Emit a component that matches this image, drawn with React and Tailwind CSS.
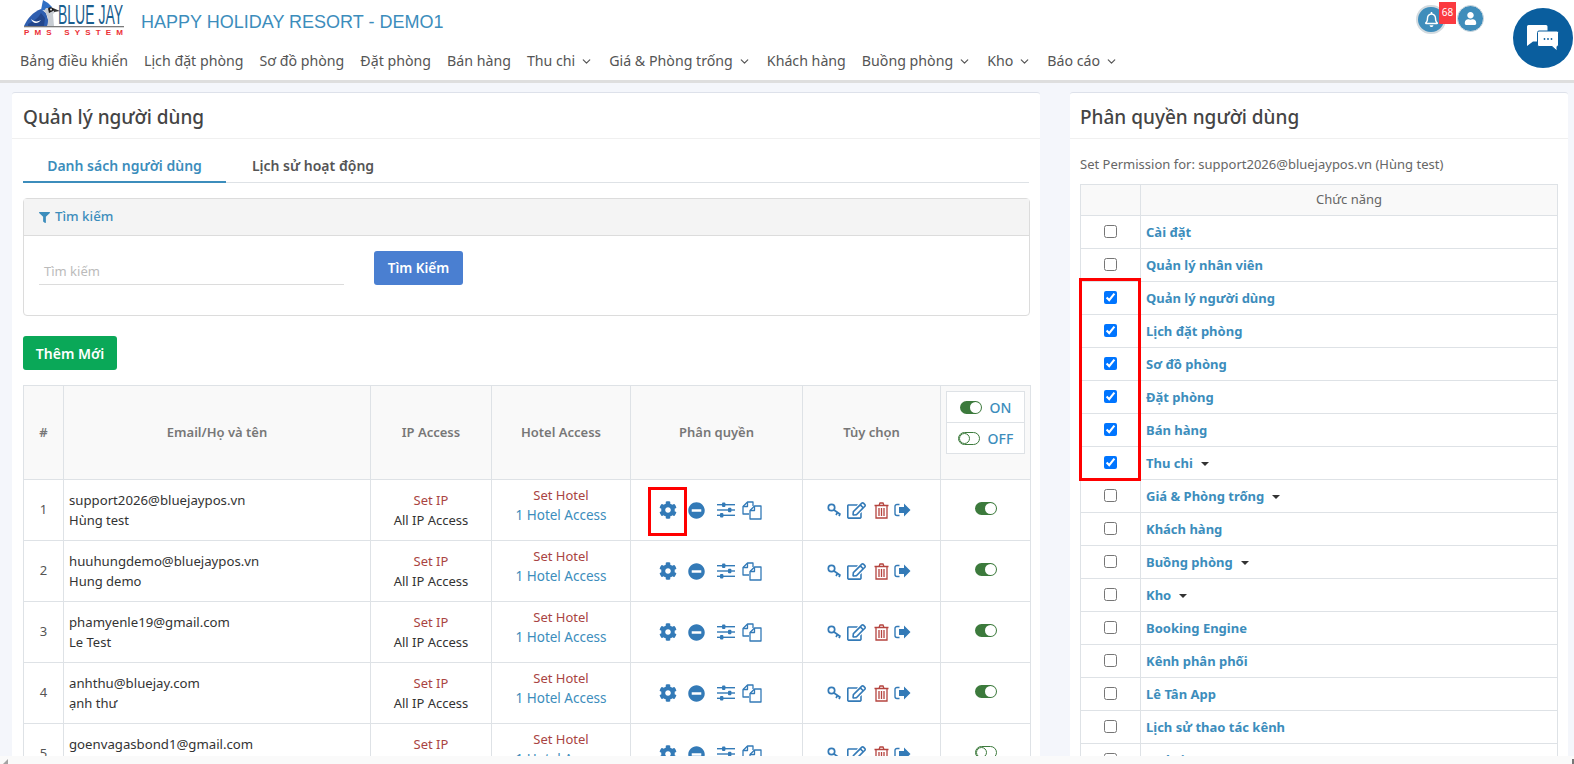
import React from "react";
import { FaCog, FaMinusCircle, FaRegEdit, FaFilter, FaRegBell, FaUser } from "react-icons/fa";
import { ChevronDown } from "lucide-react";

const nav = [
  ["Bảng điều khiển"], ["Lịch đặt phòng"], ["Sơ đồ phòng"], ["Đặt phòng"], ["Bán hàng"], ["Thu chi", 1],
  ["Giá & Phòng trống", 1], ["Khách hàng"], ["Buồng phòng", 1], ["Kho", 1], ["Báo cáo", 1],
];
const users = [
  ["support2026@bluejaypos.vn", "Hùng test", true],
  ["huuhungdemo@bluejaypos.vn", "Hung demo", true],
  ["phamyenle19@gmail.com", "Le Test", true],
  ["anhthu@bluejay.com", "ạnh thư", true],
  ["goenvagasbond1@gmail.com", "goen", false],
];
const perms = [
  ["Cài đặt"], ["Quản lý nhân viên"], ["Quản lý người dùng", 0, 1], ["Lịch đặt phòng", 0, 1], ["Sơ đồ phòng", 0, 1],
  ["Đặt phòng", 0, 1], ["Bán hàng", 0, 1], ["Thu chi", 1, 1], ["Giá & Phòng trống", 1], ["Khách hàng"],
  ["Buồng phòng", 1], ["Kho", 1], ["Booking Engine"], ["Kênh phân phối"], ["Lê Tân App"], ["Lịch sử thao tác kênh"], ["Website"],
];

function Toggle({ on }) {
  return on ? (
    <span className="inline-flex w-[22px] h-[13px] rounded-full bg-[#3c7a3c] items-center justify-end pr-[1px]">
      <span className="w-[11px] h-[11px] rounded-full bg-white" />
    </span>
  ) : (
    <span className="inline-flex w-[22px] h-[13px] rounded-full border border-[#3c7a3c] bg-white items-center justify-start">
      <span className="w-[11px] h-[11px] rounded-full bg-white border border-[#3c7a3c]" />
    </span>
  );
}
function Sliders() {
  return (
    <svg width="18" height="16" viewBox="0 0 18 16" fill="#337ab7">
      <rect x="0" y="2" width="18" height="1.4" /><rect x="0" y="7.3" width="18" height="1.4" /><rect x="0" y="12.6" width="18" height="1.4" />
      <rect x="5" y="0.5" width="3.4" height="4.4" rx="1" /><rect x="11" y="5.8" width="3.4" height="4.4" rx="1" /><rect x="3" y="11.1" width="3.4" height="4.4" rx="1" />
    </svg>
  );
}
function Copy() {
  return (
    <svg width="20" height="19" viewBox="0 0 20 19" fill="none" stroke="#337ab7" strokeWidth="1.3" strokeLinejoin="round">
      <path d="M7 13H1V5.500L5.500 1H11V5" />
      <path d="M5.500 1V5.500H1" />
      <path d="M8 18V9.500L12.500 5H19V18Z" fill="white" />
      <path d="M12.500 5V9.500H8" />
    </svg>
  );
}
function Key() {
  return (
    <svg width="15" height="14" viewBox="0 0 15 14" fill="none" stroke="#337ab7" strokeWidth="1.7">
      <circle cx="4.500" cy="4.500" r="3.200" />
      <path d="M7 7L13.500 11.500M10.500 9.500L9 12M13 11L12 13" />
    </svg>
  );
}
function Trash() {
  return (
    <svg width="15" height="17" viewBox="0 0 15 17" fill="none" stroke="#b5443f" strokeWidth="1.3">
      <path d="M0.500 3.500H14.500M5 3.500L6 1H9L10 3.500" />
      <path d="M2 3.500V16H13V3.500" />
      <path d="M5 6V14M7.500 6V14M10 6V14" />
    </svg>
  );
}
function Out() {
  return (
    <svg width="17" height="14" viewBox="0 0 17 14" fill="#337ab7">
      <path d="M5.500 1.500H3A2 2 0 0 0 1 3.500V10.500A2 2 0 0 0 3 12.500H5.500" fill="none" stroke="#337ab7" strokeWidth="1.4" />
      <path d="M10 0.500L16.500 7L10 13.500V10H5V4H10Z" />
    </svg>
  );
}
function Logo() {
  return (
    <svg width="104" height="37" viewBox="0 0 104 37" className="shrink-0">
      <path d="M2 26C5 19 11 12 19 9L24 13L28 26Z" fill="#2f5fb0" />
      <path d="M6 24C10 22 16 19 19 13L23 18L22 26H6Z" fill="#23478c" />
      <path d="M9 19C12 22 16 22 19 20C16 24 11 24 9 19Z" fill="#fff" />
      <path d="M19 10L21 0L26 3L30 7L27 11Z" fill="#2f6fc4" />
      <path d="M24 8L31 8L33 12L31 14L32 26H25C27 21 26 15 22 11Z" fill="#c7ccd2" />
      <path d="M26 8.500C28 6.500 31 7 33 10L27 13Z" fill="#1d1d1f" />
      <path d="M32 8.500L38 11L32 12Z" fill="#333" />
      <circle cx="29" cy="9.500" r="0.900" fill="#fff" />
      <rect x="2" y="26" width="100" height="1.300" fill="#7b7b7b" />
      <text x="36" y="23.500" textLength="65" lengthAdjust="spacingAndGlyphs" fontFamily="'Liberation Sans'" fontSize="27" fill="#1b5f8f">BLUE JAY</text>
      <text x="2" y="35" textLength="99" lengthAdjust="spacing" fontFamily="'Liberation Sans'" fontWeight="700" fontSize="8" fill="#ec2f36">PMS SYSTEM</text>
    </svg>
  );
}
function Chat() {
  return (
    <svg width="34" height="28" viewBox="0 0 34 28">
      <path d="M1 2.500A1.500 1.500 0 0 1 2.500 1H20A1.500 1.500 0 0 1 21.500 2.500V16A1.500 1.500 0 0 1 20 17.500H7L1 22Z" fill="#fff" />
      <path d="M11.500 8.500A1.500 1.500 0 0 1 13 7H31A1.500 1.500 0 0 1 32.500 8.500V21A1.500 1.500 0 0 1 31 22.500V27L26 22.500H13A1.500 1.500 0 0 1 11.500 21Z" fill="#fff" stroke="#0a5e9e" strokeWidth="1" />
      <circle cx="18.500" cy="15" r="0.900" fill="#0a5e9e" /><circle cx="22" cy="15" r="0.900" fill="#0a5e9e" /><circle cx="25.500" cy="15" r="0.900" fill="#0a5e9e" />
    </svg>
  );
}

export default function App() {
  const th = "border border-[#dee2e6] text-[13px] font-semibold text-[#777] text-center align-middle";
  const td = "border border-[#dee2e6] align-middle text-center text-[13px] text-[#333] h-[61px]";
  return (
    <div className="h-screen w-full flex flex-col overflow-hidden bg-[#f4f6fb] text-[#333] font-['Noto_Sans','Open_Sans',sans-serif] relative">
      <header className="bg-white h-[83px] shrink-0 border-b-[3px] border-[#dedede] pl-[20px] flex flex-col">
        <div className="h-[49px] shrink-0 flex items-start">
          <div className="ml-[2px]"><Logo /></div>
          <div className="ml-[15px] mt-[12px] text-[18px] leading-[20px] text-[#3c8dbc] font-['Liberation_Sans',sans-serif]">HAPPY HOLIDAY RESORT - DEMO1</div>
          <div className="ml-auto mr-[90px] mt-[5px] flex items-start gap-[11px]">
            <span className="relative w-[30px] h-[29px] rounded-full bg-[#3f8dbb] border-2 border-[#d3dbe0] flex items-center justify-center">
              <FaRegBell className="text-white text-[15px]" />
              <span className="absolute left-[21px] top-[-5px] w-[17px] h-[22px] bg-[#fb3a40] text-white text-[10px] leading-[20px] text-center">68</span>
            </span>
            <span className="w-[27px] h-[27px] rounded-full bg-[#3f8dbb] border border-[#d3dbe0] flex items-center justify-center">
              <FaUser className="text-white text-[13px]" />
            </span>
          </div>
        </div>
        <nav className="flex gap-[16px] text-[14.2px] leading-[24px] text-[#555]">
          {nav.map(([t, c]) => (
            <span key={t} className="flex items-center gap-[5px] whitespace-nowrap">{t}{c ? <ChevronDown size={13} strokeWidth={2.2} /> : null}</span>
          ))}
        </nav>
      </header>

      <span className="absolute left-[1513px] top-[8px] w-[60px] h-[60px] rounded-full bg-[#0a5e9e] flex items-center justify-center z-20"><Chat /></span>

      <main className="flex-1 min-h-0 overflow-hidden flex items-start pl-[12px] pr-[6px] pt-[9px] gap-[30px]">
        <section className="w-[1028px] bg-white border-t border-[#dde1ea] rounded-t-[3px] shrink-0">
          <h2 className="h-[46px] px-[11px] pt-[3px] flex items-center text-[19px] font-medium text-[#444] border-b border-[#f0f0f0]">Quản lý người dùng</h2>
          <div className="px-[11px] pt-[13px]">
            <div className="flex h-[31px] border-b border-[#dee2e6] text-[14px] font-semibold w-[1006px]">
              <div className="w-[203px] h-[31px] text-center text-[#3c8dbc] border-b-2 border-[#3c8dbc] leading-[28px]">Danh sách người dùng</div>
              <div className="w-[148px] text-center text-[#555] leading-[28px] ml-[13px]">Lịch sử hoạt động</div>
            </div>
            <div className="mt-[15px] w-[1007px] h-[118px] border border-[#dcdcdc] rounded-[4px]">
              <div className="h-[37px] bg-[#f4f4f4] border-b border-[#dcdcdc] pl-[15px] flex items-center gap-[5px] text-[13.3px] font-medium text-[#3c8dbc]"><FaFilter className="text-[11px]" />Tìm kiếm</div>
              <div className="flex items-start pl-[15px] pt-[15px]">
                <div className="w-[305px] mt-[8px] h-[26px] border-b border-[#dcdcdc] pl-[5px] text-[13px] leading-[24px] text-[#bbb]">Tìm kiếm</div>
                <button className="ml-[30px] w-[89px] h-[34px] bg-[#4a7fd1] rounded-[3px] text-white text-[13.500px] font-semibold">Tìm Kiếm</button>
              </div>
            </div>
            <button className="mt-[20px] block w-[94px] h-[34px] bg-[#0aa858] rounded-[3px] text-white text-[14px] font-semibold">Thêm Mới</button>
            <table className="mt-[15px] border-collapse table-fixed w-[1007px] bg-white">
              <colgroup>
                <col className="w-[40px]" /><col className="w-[307px]" /><col className="w-[121px]" /><col className="w-[139px]" /><col className="w-[172px]" /><col className="w-[138px]" /><col className="w-[90px]" />
              </colgroup>
              <thead>
                <tr className="h-[94px] bg-[#f9f9f9]">
                  <th className={th}>#</th><th className={th}>Email/Họ và tên</th><th className={th}>IP Access</th><th className={th}>Hotel Access</th><th className={th}>Phân quyền</th><th className={th}>Tùy chọn</th>
                  <th className={th + " !align-top pt-[5px]"}>
                    <div className="mx-auto w-[79px] h-[63px] bg-white border border-[#dee2e6] text-[#3c8dbc] text-[14px] font-medium">
                      <div className="h-[31px] flex items-center justify-center gap-[8px] border-b border-[#dee2e6]"><Toggle on />ON</div>
                      <div className="h-[30px] flex items-center justify-center gap-[8px]"><Toggle />OFF</div>
                    </div>
                  </th>
                </tr>
              </thead>
              <tbody>
                {users.map(([mail, name, on], i) => (
                  <tr key={mail}>
                    <td className={td + " text-[#555]"}>{i + 1}</td>
                    <td className={td + " !text-left pl-[5px] leading-[20px]"}><div className="text-[13.2px]">{mail}</div><div>{name}</div></td>
                    <td className={td + " leading-[20px]"}><div className="text-[#a94442]">Set IP</div><div>All IP Access</div></td>
                    <td className={td + " leading-[20px] pb-[10px]"}><div className="text-[#a94442]">Set Hotel</div><div className="text-[#3c8dbc] text-[13.500px]">1 Hotel Access</div></td>
                    <td className={td}>
                      <div className="flex items-center justify-center pr-[13px] gap-[11px]">
                        <FaCog className="text-[#337ab7] text-[18px]" />
                        <FaMinusCircle className="text-[#337ab7] text-[17px]" />
                        <span className="ml-[1px]"><Sliders /></span>
                        <span className="-ml-[4px]"><Copy /></span>
                      </div>
                    </td>
                    <td className={td}>
                      <div className="flex items-center justify-center pr-[6px] gap-[5px]">
                        <Key />
                        <FaRegEdit className="text-[#337ab7] text-[19px]" />
                        <span className="ml-[3px]"><Trash /></span>
                        <Out />
                      </div>
                    </td>
                    <td className={td}><Toggle on={on} /></td>
                  </tr>
                ))}
              </tbody>
            </table>
          </div>
        </section>

        <section className="flex-1 min-w-0 bg-white border-t border-[#dde1ea] rounded-t-[3px]">
          <h2 className="h-[46px] px-[10px] pt-[3px] flex items-center text-[19px] font-medium text-[#444] border-b border-[#f0f0f0]">Phân quyền người dùng</h2>
          <div className="px-[10px]">
            <p className="h-[45px] pt-[15px] text-[13px] leading-[20px] text-[#666]">Set Permission for: support2026@bluejaypos.vn (Hùng test)</p>
            <table className="border-collapse table-fixed w-[478px]">
              <colgroup><col className="w-[60px]" /><col /></colgroup>
              <thead>
                <tr className="h-[31px] bg-[#f9f9f9]"><th className="border border-[#dee2e6]" /><th className="border border-[#dee2e6] text-[13px] font-normal text-[#666]">Chức năng</th></tr>
              </thead>
              <tbody>
                {perms.map(([t, c, ch]) => (
                  <tr key={t} className="h-[33px]">
                    <td className="border border-[#dee2e6] text-center align-middle"><input type="checkbox" defaultChecked={!!ch} className="block mx-auto w-[13px] h-[13px] -translate-y-[1px]" /></td>
                    <td className="border border-[#dee2e6] pl-[5px] pt-[2px] text-[13px] font-bold text-[#3c8dbc]">
                      <span className="inline-flex items-center gap-[6px]">{t}{c ? <span className="w-0 h-0 border-x-[4px] border-x-transparent border-t-[4px] border-t-[#333] ml-[2px]" /> : null}</span>
                    </td>
                  </tr>
                ))}
              </tbody>
            </table>
          </div>
        </section>
      </main>

      <div className="h-[8px] shrink-0 bg-[#fafafa] relative z-10 flex items-end justify-between pl-[3px]">
        <span className="w-0 h-0 border-b-[5px] border-b-[#a3a3a3] border-l-[5px] border-l-transparent" />
        <span className="w-[2px] h-[5px] bg-[#777]" />
      </div>

      <div className="absolute left-[648px] top-[487px] w-[39px] h-[49px] border-[3px] border-[#f00] z-10" />
      <div className="absolute left-[1079px] top-[278px] w-[62px] h-[203px] border-[3px] border-[#f00] z-10" />
    </div>
  );
}
